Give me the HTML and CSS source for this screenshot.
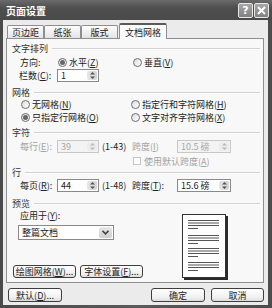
FILE: index.html
```html
<!DOCTYPE html>
<html lang="zh">
<head>
<meta charset="utf-8">
<title>页面设置</title>
<link rel="stylesheet" href="styles.css">
</head>
<body>
<div class="dialog">
  <div class="titlebar">
    <span class="title">页面设置</span>
    <span class="tb-btns">
      <span class="tbtn">?</span>
      <span class="tbtn">
        <svg width="9" height="9" viewBox="0 0 9 9"><path d="M1 1L8 8M8 1L1 8" stroke="#fff" stroke-width="2"/></svg>
      </span>
    </span>
  </div>
  <div class="client">
    <div class="tabs">
      <div class="tab">页边距</div>
      <div class="tab">纸张</div>
      <div class="tab">版式</div>
      <div class="tab active">文档网格</div>
    </div>
    <div class="panel">
      <div class="grp">文字排列</div>
      <div class="row r-dir">
        <span class="lbl w38">方向:</span>
        <span class="opt w75"><span class="radio on"></span>水平(<u>Z</u>)</span>
        <span class="opt"><span class="radio"></span>垂直(<u>V</u>)</span>
      </div>
      <div class="row r-cols">
        <span class="lbl w38">栏数(<u>C</u>):</span>
        <span class="spin w42"><span class="val">1</span><span class="arrows"><svg width="7" height="9" viewBox="0 0 7 9"><path d="M1 3.5L3.5 1L6 3.5Z M1 5.5L3.5 8L6 5.5Z" fill="#555"/></svg></span></span>
      </div>
      <div class="grp mt4">网格</div>
      <div class="row r-grid">
        <span class="opt w110"><span class="radio"></span>无网格(<u>N</u>)</span>
        <span class="opt"><span class="radio"></span>指定行和字符网格(<u>H</u>)</span>
      </div>
      <div class="row r-grid">
        <span class="opt w110"><span class="radio on"></span>只指定行网格(<u>O</u>)</span>
        <span class="opt"><span class="radio"></span>文字对齐字符网格(<u>X</u>)</span>
      </div>
      <div class="grp mt2">字符</div>
      <div class="row r-num mt2">
        <span class="lbl w37 dis">每行(<u>E</u>):</span>
        <span class="spin w42 disabled"><span class="val">39</span><span class="arrows"><svg width="7" height="9" viewBox="0 0 7 9"><path d="M1 3.5L3.5 1L6 3.5Z M1 5.5L3.5 8L6 5.5Z" fill="#bbb"/></svg></span></span>
        <span class="range">(1-43)</span>
        <span class="lbl w45 dis">跨度(<u>I</u>)</span>
        <span class="spin w54 disabled"><span class="val">10.5 磅</span><span class="arrows"><svg width="7" height="9" viewBox="0 0 7 9"><path d="M1 3.5L3.5 1L6 3.5Z M1 5.5L3.5 8L6 5.5Z" fill="#bbb"/></svg></span></span>
      </div>
      <div class="row r-check mt2">
        <span class="check"></span><span class="dis">使用默认跨度(<u>A</u>)</span>
      </div>
      <div class="grp h11">行</div>
      <div class="row r-num mt1">
        <span class="lbl w37">每页(<u>R</u>):</span>
        <span class="spin w42"><span class="val">44</span><span class="arrows"><svg width="7" height="9" viewBox="0 0 7 9"><path d="M1 3.5L3.5 1L6 3.5Z M1 5.5L3.5 8L6 5.5Z" fill="#555"/></svg></span></span>
        <span class="range">(1-48)</span>
        <span class="lbl w45">跨度(<u>T</u>):</span>
        <span class="spin w54"><span class="val">15.6 磅</span><span class="arrows"><svg width="7" height="9" viewBox="0 0 7 9"><path d="M1 3.5L3.5 1L6 3.5Z M1 5.5L3.5 8L6 5.5Z" fill="#555"/></svg></span></span>
      </div>
      <div class="grp mt5">预览</div>
      <div class="preview">
        <div class="pv-left">
          <div class="apply">应用于(<u>Y</u>):</div>
          <div class="select"><span class="val">整篇文档</span><span class="dd"><svg width="7" height="5" viewBox="0 0 7 5"><path d="M0.5 0.8L3.5 3.8L6.5 0.8" fill="none" stroke="#444" stroke-width="1.6"/></svg></span></div>
          <div class="pv-btns">
            <span class="btn w63">绘图网格(<u>W</u>)...</span>
            <span class="btn w63">字体设置(<u>F</u>)...</span>
          </div>
        </div>
        <div class="page">
          <svg width="42" height="62" viewBox="0 0 42 62">
            <g stroke="#555" stroke-width="1">
              <path d="M5 5.5H36M5 8H36M5 10.5H36M5 13.5H15"/>
              <path d="M5 20.5H36M5 23H36M5 25.5H36M5 28.5H15"/>
              <path d="M5 33.5H36M5 36H36M5 38.5H36M5 41.5H15"/>
              <path d="M5 47.5H36M5 50H36M5 52.5H36M5 55.5H15"/>
            </g>
          </svg>
        </div>
      </div>
    </div>
    <div class="footer">
      <span class="btn w54">默认(<u>D</u>)...</span>
      <span class="spacer"></span>
      <span class="btn w54">确定</span>
      <span class="btn w53">取消</span>
    </div>
  </div>
</div>
</body>
</html>
```
FILE: styles.css
```css
* { box-sizing: border-box; }

body {
  margin: 0;
  width: 272px;
  height: 308px;
  overflow: hidden;
  font-family: "Noto Sans CJK SC", "Noto Sans", sans-serif;
  font-size: 9px;
  color: #222;
  background: #fff;
}

u { text-decoration: underline; text-underline-offset: 1px; }

.dialog {
  width: 272px;
  height: 308px;
  background: linear-gradient(90deg, #4a4a4a, #5a5a5a 50%, #4c4c4c);
  display: flex;
  flex-direction: column;
}

.titlebar {
  height: 20px;
  display: flex;
  align-items: center;
  padding: 0 3px 0 6px;
  color: #fff;
  font-weight: bold;
  font-size: 10px;
  background: linear-gradient(#6a6a6a, #4e4e4e 40%, #4a4a4a);
}

.title { flex: 1; }

.tb-btns { display: flex; gap: 1px; }

.tbtn {
  width: 15px;
  height: 15px;
  border: 1px solid #e8e8e8;
  border-radius: 2px;
  background: linear-gradient(#a8a8a8, #808080);
  color: #fff;
  display: flex;
  align-items: center;
  justify-content: center;
  font-size: 11px;
  font-family: "DejaVu Sans", sans-serif;
  font-weight: bold;
}

.client {
  flex: 1;
  margin: 0 4px 3px 3px;
  background: #ebebeb;
  padding: 3px 4px 0 3px;
  display: flex;
  flex-direction: column;
}

.tabs {
  display: flex;
  align-items: flex-end;
  height: 15px;
  padding-left: 1px;
}

.tab {
  width: 37px;
  height: 13px;
  border: 1px solid #8e8e8e;
  border-bottom: none;
  border-radius: 2px 2px 0 0;
  background: linear-gradient(#fdfdfd, #e4e4e4);
  display: flex;
  align-items: center;
  justify-content: center;
  line-height: 1;
}

.tab.active {
  width: 48px;
  height: 16px;
  margin-left: 1px;
  margin-bottom: -1px;
  background: #fbfbfb;
  border-top: 2px solid #5a5a5a;
  position: relative;
  z-index: 1;
}

.panel {
  height: 245px;
  border: 1px solid #8e8e8e;
  background: #f8f8f8;
  display: flex;
  flex-direction: column;
  padding: 3px 3px 0 0;
}

.grp {
  display: flex;
  align-items: center;
  gap: 4px;
  height: 12px;
  padding-left: 5px;
  color: #333;
}
.grp::after {
  content: "";
  flex: 1;
  height: 1px;
  background: #d2d2d2;
  box-shadow: 0 1px 0 #fff;
}
.h11 { height: 11px; }

.mt1 { margin-top: 1px; }
.mt2 { margin-top: 2px; }
.mt4 { margin-top: 4px; }
.mt5 { margin-top: 5px; }

.row {
  display: flex;
  align-items: center;
  white-space: nowrap;
}

.r-dir { height: 13px; margin-top: 2px; padding-left: 13px; }
.r-cols { height: 13px; padding-left: 12px; }
.r-grid { height: 13px; padding-left: 14px; }
.r-num { height: 13px; padding-left: 13px; }
.r-check { height: 12px; padding-left: 126px; }

.lbl { display: inline-block; }
.w37 { width: 37px; }
.w38 { width: 38px; }
.w42 { width: 42px; }
.w45 { width: 45px; }
.w53 { width: 53px; }
.w54 { width: 54px; }
.w63 { width: 63px; }
.w75 { width: 75px; }
.w110 { width: 110px; }

.dis { color: #a2a2a2; }

.opt { display: inline-flex; align-items: center; }

.radio {
  width: 9px;
  height: 9px;
  border: 1px solid #6e6e6e;
  border-radius: 50%;
  background: linear-gradient(135deg, #dcdcdc, #fff);
  margin-right: 2px;
  display: inline-flex;
  align-items: center;
  justify-content: center;
  flex: none;
}
.radio.on::after {
  content: "";
  width: 5px;
  height: 5px;
  border-radius: 50%;
  background: #666;
}

.check {
  width: 8px;
  height: 8px;
  border: 1px solid #c4c4c4;
  background: #fff;
  margin-right: 3px;
}

.spin {
  display: inline-flex;
  height: 13px;
  border: 1px solid #8a8a8a;
  background: #fff;
  align-items: stretch;
}
.spin .val {
  flex: 1;
  padding-left: 3px;
  line-height: 11px;
}
.spin .arrows {
  width: 10px;
  margin: 1px;
  border-radius: 2px;
  background: linear-gradient(90deg, #e6e6e6, #d2d2d2);
  display: flex;
  align-items: center;
  justify-content: center;
}
.spin.disabled {
  border-color: #c8c8c8;
  background: #f3f3f3;
  color: #a8a8a8;
}
.spin.disabled .arrows { background: #ececec; }

.range {
  width: 30px;
  margin-left: 3px;
  color: #222;
}

.preview {
  flex: 1;
  display: flex;
}

.pv-left {
  width: 175px;
  padding-left: 6px;
  display: flex;
  flex-direction: column;
}

.apply {
  height: 12px;
  margin-top: 1px;
  margin-left: 7px;
  line-height: 12px;
}

.select {
  width: 96px;
  height: 15px;
  margin-top: 3px;
  margin-left: 5px;
  border: 1px solid #8a8a8a;
  background: #fff;
  display: flex;
}
.select .val { flex: 1; padding-left: 3px; line-height: 13px; }
.select .dd {
  width: 13px;
  margin: 1px;
  border-radius: 2px;
  background: linear-gradient(#e8e8e8, #cfcfcf);
  display: flex;
  align-items: center;
  justify-content: center;
}

.pv-btns {
  display: flex;
  gap: 4px;
  margin-top: 25px;
}

.btn {
  height: 13px;
  border: 1px solid #3e3e3e;
  border-radius: 3px;
  background: linear-gradient(#ffffff, #f0f0f0 70%, #dcdcdc);
  display: inline-flex;
  align-items: center;
  justify-content: center;
  white-space: nowrap;
  line-height: 1;
}

.page {
  width: 44px;
  height: 64px;
  margin-top: 5px;
  border: 1px solid #333;
  background: #fff;
  box-shadow: 2px 2px 0 #2a2a2a;
}
.page svg { display: block; }

.footer {
  height: 14px;
  margin-top: 5px;
  display: flex;
  gap: 6px;
  padding-left: 2px;
}
.footer .btn { height: 14px; }
.spacer { flex: 1; }
```
